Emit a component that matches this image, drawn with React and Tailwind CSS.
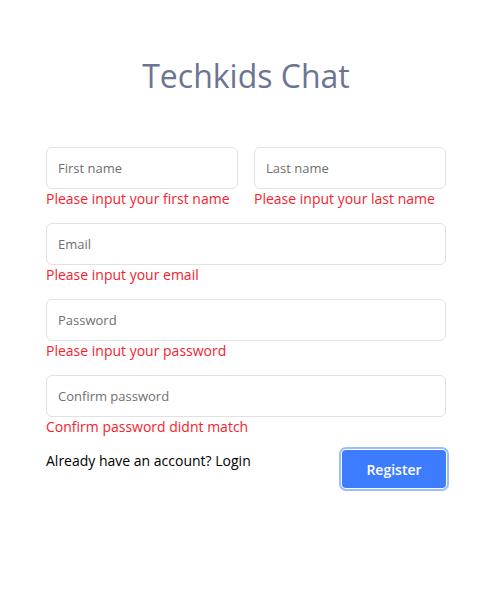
import { useState } from 'react';

const Field = ({ placeholder, error, type = 'text' }) => (
  <div className="flex flex-col flex-1">
    <input
      type={type}
      placeholder={placeholder}
      className="h-[42px] w-full rounded-md border border-[#e2e2e2] px-[11px] text-[13px] text-[#333] placeholder:text-[#6f6f6f] outline-none"
    />
    <p className="h-[20px] leading-[20px] text-[14px] text-[#f5222d]">{error}</p>
  </div>
);

const App = () => {
  const [submitted] = useState(true);

  return (
    <div className="min-h-[592px] bg-white font-['Open_Sans',sans-serif]">
      <div className="ml-[46px] w-[400px] pt-[55px]">
        <h1 className="text-center text-[32px] leading-[42px] text-[#6b7591]">Techkids Chat</h1>

        <form className="mt-[50px] flex flex-col gap-[14px]">
          <div className="flex gap-4">
            <Field placeholder="First name" error={submitted && 'Please input your first name'} />
            <Field placeholder="Last name" error={submitted && 'Please input your last name'} />
          </div>
          <Field placeholder="Email" error={submitted && 'Please input your email'} />
          <Field placeholder="Password" type="password" error={submitted && 'Please input your password'} />
          <Field placeholder="Confirm password" type="password" error={submitted && 'Confirm password didnt match'} />

          <div className="-mt-[1px] flex items-start justify-between">
            <span className="mt-[1px] text-[14px] leading-[20px] text-black">Already have an account? Login</span>
            <button
              type="button"
              className="h-[38px] w-[104px] rounded-[4px] bg-[#3d7cff] text-[14px] font-semibold text-white ring-2 ring-[#9cbcff] ring-offset-1 ring-offset-white"
            >
              Register
            </button>
          </div>
        </form>
      </div>
    </div>
  );
};

export default App;
